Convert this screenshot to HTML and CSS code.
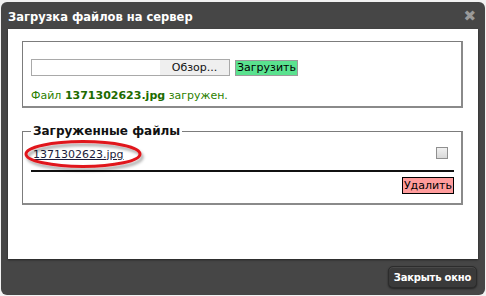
FILE: index.html
```html
<!DOCTYPE html>
<html lang="ru">
<head>
<meta charset="utf-8">
<title>Загрузка файлов на сервер</title>
<link rel="stylesheet" href="styles.css">
</head>
<body>
<div class="dialog">
  <div class="titlebar">
    <span class="title">Загрузка файлов на сервер</span>
    <span class="close">&#10006;</span>
  </div>
  <div class="content">
    <fieldset class="box upload">
      <div class="row">
        <div class="file"><span class="file-name"></span><span class="browse">Обзор...</span></div>
        <button class="btn-upload">Загрузить</button>
      </div>
      <p class="status">Файл <b>1371302623.jpg</b> загружен.</p>
    </fieldset>
    <fieldset class="box files">
      <legend>Загруженные файлы</legend>
      <div class="file-row">
        <a href="#" class="file-link">1371302623.jpg</a>
        <span class="check"></span>
        <svg class="mark" width="126" height="36" viewBox="0 0 126 36">
          <defs>
            <filter id="sh" x="-10%" y="-20%" width="130%" height="160%">
              <feDropShadow dx="2" dy="3" stdDeviation="1.8" flood-color="#000" flood-opacity="0.35"/>
            </filter>
          </defs>
          <ellipse cx="60" cy="15" rx="57" ry="12.5" fill="none" stroke="#e0161b" stroke-width="3" filter="url(#sh)"/>
        </svg>
      </div>
      <div class="rule"></div>
      <div class="actions"><button class="btn-delete">Удалить</button></div>
    </fieldset>
  </div>
  <div class="footer">
    <button class="btn-close">Закрыть окно</button>
  </div>
</div>
</body>
</html>
```
FILE: styles.css
```css
html, body {
  margin: 0;
  padding: 0;
  background: #f2f2f2;
}
body {
  padding: 2px 1px 1px 1px;
  font-family: "DejaVu Sans", Verdana, sans-serif;
}
.dialog {
  background: #464646;
  border-radius: 6px;
  padding: 0 7px 0 7px;
  height: 293px;
  box-sizing: border-box;
  display: flex;
  flex-direction: column;
}
.titlebar {
  height: 27px;
  display: flex;
  align-items: center;
  justify-content: space-between;
}
.title {
  color: #fff;
  font-weight: bold;
  font-size: 11.5px;
  padding-top: 2px;
}
.close {
  color: #9a9a9a;
  font-size: 15px;
  font-weight: bold;
  margin-right: 2px;
  padding-top: 1px;
}
.content {
  background: #fff;
  height: 230px;
  padding: 12px 15px 0 14px;
  box-sizing: border-box;
  box-shadow: 0 1px 2px rgba(0,0,0,0.5);
}
.box {
  margin: 0;
  border: 1px solid #7c7c7c;
  border-right-width: 2px;
  border-bottom-width: 2px;
  border-right-color: #8a8a8a;
  border-bottom-color: #8a8a8a;
  padding: 0 8px;
}
.upload {
  height: 67px;
  box-sizing: border-box;
  padding-top: 17px;
}
.row {
  display: flex;
  align-items: center;
  gap: 5px;
}
.file {
  width: 199px;
  height: 17px;
  box-sizing: border-box;
  border: 1px solid #a9a9a9;
  display: flex;
  justify-content: flex-end;
}
.browse {
  width: 69px;
  background: #efefef;
  font-size: 11px;
  color: #111;
  text-align: center;
  line-height: 15px;
}
.btn-upload {
  font-family: inherit;
  font-size: 11px;
  background: #5ae28f;
  border: 1px solid #9a9a9a;
  padding: 0 1px;
  height: 16px;
  line-height: 14px;
  color: #000;
  margin-top: 1px;
}
.status {
  margin: 13px 0 0 0;
  font-size: 11px;
  color: #2c7f00;
}
.status b { color: #1d6b00; }
.files {
  margin-top: 16px;
  height: 81px;
  box-sizing: border-box;
  padding: 6px 7px 0 8px;
  position: relative;
}
.files legend {
  font-size: 12px;
  font-weight: bold;
  color: #111;
  padding: 0 2px;
  margin-left: 0;
}
.file-row {
  display: flex;
  justify-content: space-between;
  align-items: center;
  height: 18px;
  padding-left: 2px;
  position: relative;
}
.file-link {
  font-size: 11px;
  color: #1c1c3c;
  margin-top: 2px;
}
.check {
  width: 10px;
  height: 10px;
  border: 1px solid #8f8f8f;
  background: linear-gradient(#f0f0f0, #d8d8d8);
  margin-right: 6px;
}
.mark {
  position: absolute;
  left: -8px;
  top: -5px;
  pointer-events: none;
}
.rule {
  height: 2px;
  background: #111;
  margin-top: 8px;
}
.actions {
  display: flex;
  justify-content: flex-end;
  margin-top: 5px;
}
.btn-delete {
  font-family: inherit;
  font-size: 11px;
  background: #ff9c9c;
  border: 1px solid #000;
  height: 17px;
  padding: 0 1px;
  line-height: 15px;
  color: #000;
}
.footer {
  flex: 1;
  display: flex;
  justify-content: flex-end;
  align-items: flex-start;
  padding-top: 7px;
}
.btn-close {
  font-family: inherit;
  font-size: 10px;
  letter-spacing: -0.2px;
  font-weight: bold;
  color: #fff;
  background: #3a3a3a;
  border: 1px solid #2c2c2c;
  border-radius: 5px;
  height: 22px;
  width: 89px;
  padding: 0;
  white-space: nowrap;
  box-shadow: 0 1px 2px rgba(0,0,0,0.5), inset 0 1px 0 rgba(255,255,255,0.08);
  margin-right: 1px;
}
```
